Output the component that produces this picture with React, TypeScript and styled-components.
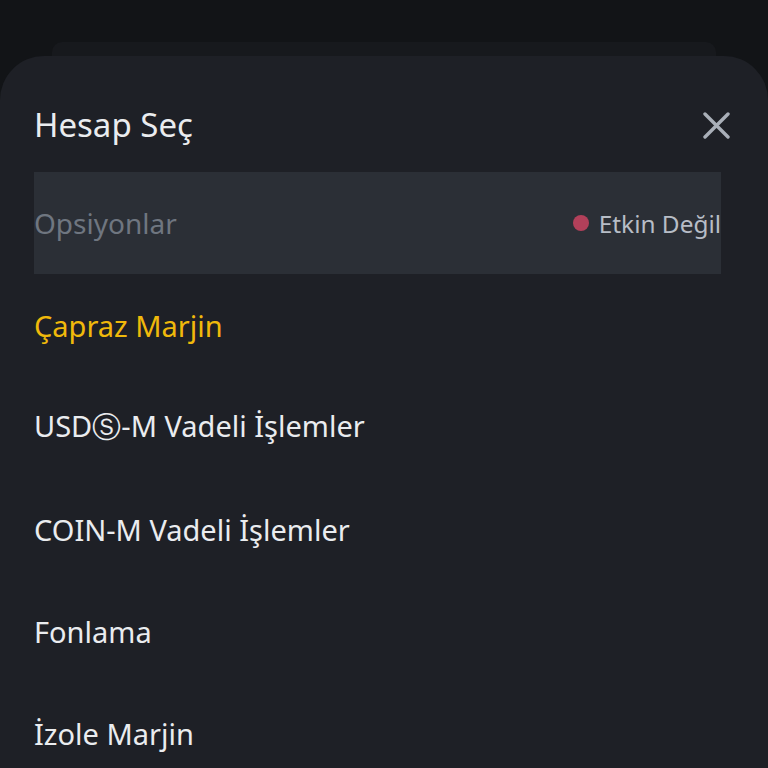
import React from "react";
import styled, { createGlobalStyle } from "styled-components";

const Global = createGlobalStyle`
  html, body { margin: 0; padding: 0; background: #121417; }
  body { font-family: "Noto Sans", "Open Sans", sans-serif; }
`;

const Screen = styled.div`
  width: 768px;
  height: 768px;
  overflow: hidden;
  background: #121417;
  display: flex;
  flex-direction: column;
  padding-top: 42px;
  box-sizing: border-box;
`;

const BackSheet = styled.div`
  flex-shrink: 0;
  margin: 0 52px;
  height: 14px;
  background: #17191d;
  border-radius: 10px 10px 0 0;
`;

const Sheet = styled.div`
  flex: 1;
  min-height: 0;
  overflow: hidden;
  background: #1e2026;
  border-radius: 44px 44px 0 0;
  padding: 0 47px 0 34px;
  display: flex;
  flex-direction: column;
`;

const Header = styled.div`
  flex-shrink: 0;
  height: 116px;
  box-sizing: border-box;
  padding-top: 49px;
  display: flex;
  align-items: flex-start;
  justify-content: space-between;
`;

const Title = styled.div`
  color: #eaecef;
  font-size: 33px;
  line-height: 40px;
`;

const Close = styled.button`
  background: none;
  border: 0;
  padding: 0;
  margin-right: -15px;
  width: 40px;
  height: 40px;
  display: flex;
  align-items: center;
  justify-content: center;
  cursor: pointer;
`;

const Disabled = styled.div`
  flex-shrink: 0;
  height: 102px;
  background: #2b2f36;
  display: flex;
  align-items: center;
  justify-content: space-between;
`;

const DisabledLabel = styled.span`
  color: #6f7680;
  font-size: 28px;
`;

const Status = styled.span`
  display: flex;
  align-items: center;
  gap: 10px;
  color: #b7bdc6;
  font-size: 24.4px;
`;

const Dot = styled.span`
  width: 16px;
  height: 16px;
  border-radius: 50%;
  background: #b2405a;
`;

const Item = styled.div<{ $active?: boolean }>`
  flex-shrink: 0;
  height: 102px;
  display: flex;
  align-items: center;
  font-size: 29px;
  color: ${(p) => (p.$active ? "#f0b90b" : "#eaecef")};
`;

const items = [
  "Çapraz Marjin",
  "USDⓈ-M Vadeli İşlemler",
  "COIN-M Vadeli İşlemler",
  "Fonlama",
  "İzole Marjin",
];

export default function App() {
  return (
    <>
      <Global />
      <Screen>
        <BackSheet />
        <Sheet>
          <Header>
            <Title>Hesap Seç</Title>
            <Close aria-label="close">
              <svg width="27" height="27" viewBox="0 0 27 27">
                <path d="M2 2 L25 25 M25 2 L2 25" stroke="#a9afb8" strokeWidth="3.4" strokeLinecap="round" />
              </svg>
            </Close>
          </Header>
          <Disabled>
            <DisabledLabel>Opsiyonlar</DisabledLabel>
            <Status>
              <Dot />
              Etkin Değil
            </Status>
          </Disabled>
          {items.map((t, i) => (
            <Item key={t} $active={i === 0}>
              {t}
            </Item>
          ))}
        </Sheet>
      </Screen>
    </>
  );
}
